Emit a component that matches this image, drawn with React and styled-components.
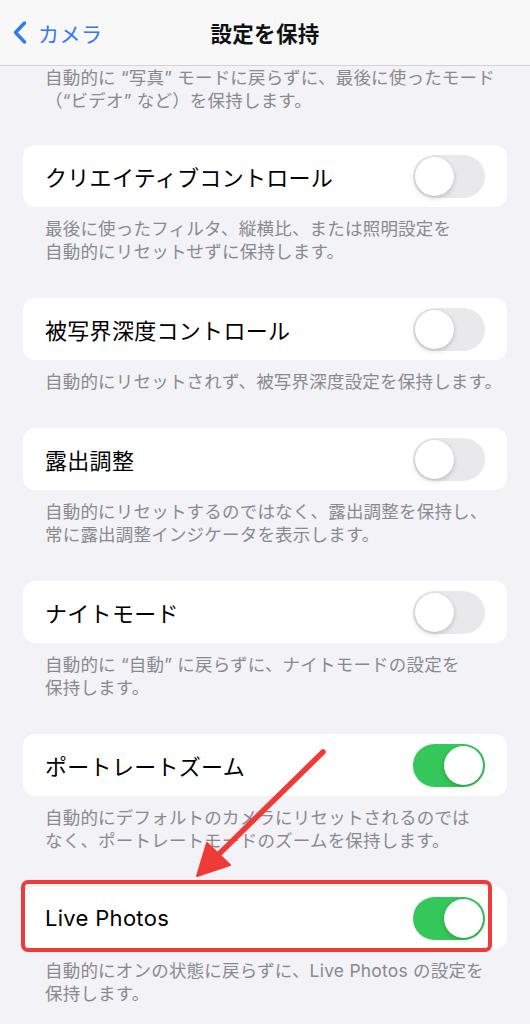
import React from 'react'
import styled, {createGlobalStyle} from 'styled-components'

const GlobalStyle = createGlobalStyle`
  body {
    margin: 0;
    background: #f2f2f7;
    font-family: Inter, "Noto Sans CJK JP", sans-serif;
    -webkit-font-smoothing: antialiased;
  }
`

const Page = styled.div`
  position: relative;
  width: 530px;
  min-height: 1024px;
  overflow: hidden;
  background: #f2f2f7;
`

const NavBar = styled.header`
  height: 65px;
  border-bottom: 1px solid #d3d3d6;
  background: #f8f8f8;
  display: grid;
  grid-template-columns: 1fr auto 1fr;
  align-items: center;
`

const BackButton = styled.div`
  display: flex;
  align-items: center;
  gap: 11px;
  padding-left: 13px;
  color: #3478f6;
  font-size: 21px;
  letter-spacing: 0.5px;
`

const Title = styled.h1`
  margin: 0;
  font-size: 21.5px;
  font-weight: 700;
  color: #111;
  letter-spacing: 0.3px;
`

const Footer = styled.p`
  margin: 0;
  padding: ${props => (props.$first ? '0 0 33px' : '10px 0 35px')};
  padding-left: 45px;
  font-size: 17.5px;
  line-height: 23px;
  color: #8a8a8e;
  white-space: nowrap;
  letter-spacing: 0.2px;
`

const Card = styled.div`
  position: relative;
  margin: 0 23px;
  height: 62px;
  background: #fff;
  border-radius: 12px;
  display: flex;
  align-items: center;
  justify-content: space-between;
  padding: 0 22px;
  box-sizing: border-box;
`

const Label = styled.span`
  font-size: 22px;
  color: #000;
  letter-spacing: 0.3px;
`

const Track = styled.div`
  position: relative;
  width: 72px;
  height: 43px;
  border-radius: 22px;
  background: ${props => (props.$on ? '#34c759' : '#e9e9eb')};
`

const Knob = styled.div`
  position: absolute;
  top: 2px;
  left: ${props => (props.$on ? '31px' : '2px')};
  width: 39px;
  height: 39px;
  border-radius: 50%;
  background: #fff;
  box-shadow: 0 2px 5px rgba(0, 0, 0, 0.18), 0 0 0 0.5px rgba(0, 0, 0, 0.06);
`

const Highlight = styled.div`
  position: absolute;
  left: -2px;
  top: -7px;
  width: 471px;
  height: 72px;
  border: 4.5px solid #ee3b37;
  border-radius: 7px;
  box-sizing: border-box;
  pointer-events: none;
`

const ArrowLayer = styled.svg`
  position: absolute;
  left: 0;
  top: 0;
  pointer-events: none;
`

function Toggle({on}) {
  return (
    <Track $on={on}>
      <Knob $on={on} />
    </Track>
  )
}

const rows = [
  {
    label: 'クリエイティブコントロール',
    on: false,
    note: ['最後に使ったフィルタ、縦横比、または照明設定を', '自動的にリセットせずに保持します。'],
  },
  {
    label: '被写界深度コントロール',
    on: false,
    note: ['自動的にリセットされず、被写界深度設定を保持します。'],
  },
  {
    label: '露出調整',
    on: false,
    note: ['自動的にリセットするのではなく、露出調整を保持し、', '常に露出調整インジケータを表示します。'],
  },
  {
    label: 'ナイトモード',
    on: false,
    note: ['自動的に “自動” に戻らずに、ナイトモードの設定を', '保持します。'],
  },
  {
    label: 'ポートレートズーム',
    on: true,
    note: ['自動的にデフォルトのカメラにリセットされるのでは', 'なく、ポートレートモードのズームを保持します。'],
  },
  {
    label: 'Live Photos',
    on: true,
    marked: true,
    note: ['自動的にオンの状態に戻らずに、Live Photos の設定を', '保持します。'],
  },
]

function Lines({lines}) {
  return lines.map((l, i) => (
    <React.Fragment key={i}>
      {i > 0 && <br />}
      {l}
    </React.Fragment>
  ))
}

export default function App() {
  return (
    <Page>
      <GlobalStyle />
      <NavBar>
        <BackButton>
          <svg width="14" height="23" viewBox="0 0 14 23">
            <path d="M11.5 2 L2.5 11.5 L11.5 21" fill="none" stroke="#3478f6" strokeWidth="3.4" strokeLinecap="round" strokeLinejoin="round" />
          </svg>
          カメラ
        </BackButton>
        <Title>設定を保持</Title>
        <div />
      </NavBar>

      <Footer $first>
        <Lines lines={['自動的に “写真” モードに戻らずに、最後に使ったモード', '（“ビデオ” など）を保持します。']} />
      </Footer>

      {rows.map(row => (
        <React.Fragment key={row.label}>
          <Card>
            <Label>{row.label}</Label>
            <Toggle on={row.on} />
            {row.marked && <Highlight />}
          </Card>
          <Footer>
            <Lines lines={row.note} />
          </Footer>
        </React.Fragment>
      ))}

      <ArrowLayer width="530" height="1024" viewBox="0 0 530 1024">
        <line x1="323" y1="752" x2="219" y2="854" stroke="#ee3b37" strokeWidth="5.5" strokeLinecap="round" />
        <polygon points="197,876 207,843 230,865" fill="#ee3b37" stroke="#ee3b37" strokeWidth="2" strokeLinejoin="round" />
      </ArrowLayer>
    </Page>
  )
}
